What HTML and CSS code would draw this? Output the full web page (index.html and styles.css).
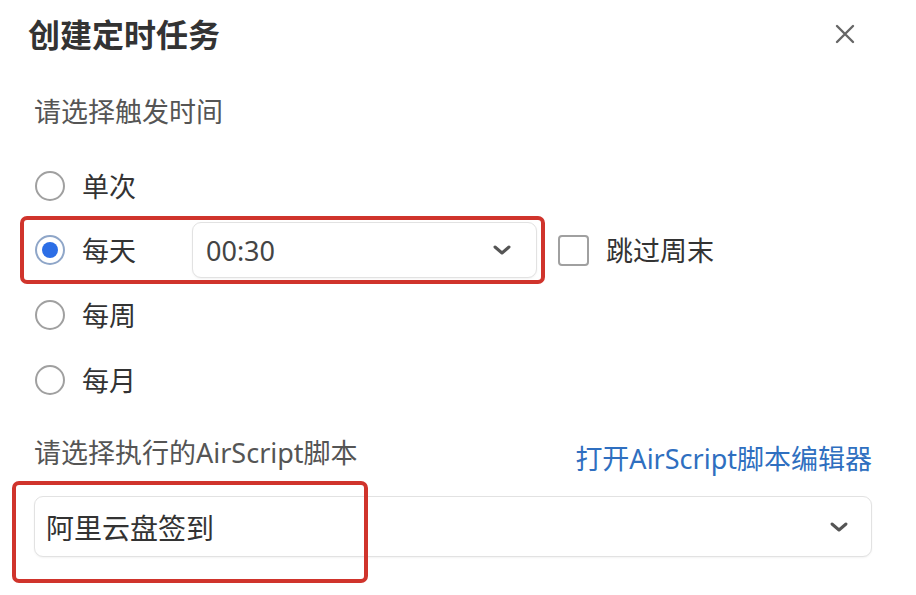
FILE: index.html
```html
<!DOCTYPE html>
<html lang="zh-CN">
<head>
    <meta charset="UTF-8" />
    <meta name="viewport" content="width=device-width, initial-scale=1.0"/>
    <title>创建定时任务</title>
    <link rel="stylesheet" href="styles.css">
</head>
<body>
    <div class="dialog">
        <div class="dialog-header">
            <h2>创建定时任务</h2>
            <button class="close" aria-label="关闭">
                <svg width="20" height="20" viewBox="0 0 20 20"><path d="M2 2 L18 18 M18 2 L2 18" stroke="#666" stroke-width="2.4" stroke-linecap="round"/></svg>
            </button>
        </div>

        <div class="label">请选择触发时间</div>

        <!-- TRIGGER OPTIONS -->
        <div class="options">
            <div class="option">
                <span class="radio"></span>
                <span class="option-text">单次</span>
            </div>
            <div class="option">
                <div class="mark-group">
                    <span class="radio checked"></span>
                    <span class="option-text">每天</span>
                    <div class="select time-select">
                        <span>00:30</span>
                        <svg width="20" height="12" viewBox="0 0 20 12"><polyline points="3,3 10,9 17,3" fill="none" stroke="#555" stroke-width="3" stroke-linecap="round" stroke-linejoin="round"/></svg>
                    </div>
                </div>
                <span class="checkbox"></span>
                <span class="option-text">跳过周末</span>
            </div>
            <div class="option">
                <span class="radio"></span>
                <span class="option-text">每周</span>
            </div>
            <div class="option">
                <span class="radio"></span>
                <span class="option-text">每月</span>
            </div>
        </div>

        <div class="label-row">
            <div class="label">请选择执行的AirScript脚本</div>
            <a href="#" class="link">打开AirScript脚本编辑器</a>
        </div>

        <div class="script-field">
            <div class="select script-select">
                <span>阿里云盘签到</span>
                <svg width="20" height="12" viewBox="0 0 20 12"><polyline points="3,3 10,9 17,3" fill="none" stroke="#555" stroke-width="3" stroke-linecap="round" stroke-linejoin="round"/></svg>
            </div>
            <div class="mark"></div>
        </div>
    </div>
</body>
</html>
```

FILE: styles.css
```css
* {
    margin: 0;
    padding: 0;
    box-sizing: border-box;
    font-family: 'Noto Sans', 'Noto Sans CJK SC', sans-serif;
}

body {
    background: #fff;
    color: #333;
    width: 916px;
    height: 595px;
    overflow: hidden;
}

.dialog {
    padding: 0 44px 0 34px;
}

.dialog-header {
    height: 70px;
    display: flex;
    align-items: center;
    justify-content: space-between;
    margin-left: -6px;
    margin-right: 17px;
}

.dialog-header h2 {
    font-size: 32px;
    font-weight: bold;
    color: #333;
    line-height: 44px;
}

.close {
    background: none;
    border: none;
    width: 20px;
    height: 20px;
    display: flex;
    margin-top: -2px;
}

.label {
    font-size: 27px;
    color: #555;
    line-height: 44px;
    margin-top: 20px;
}

.options {
    margin-top: 20px;
}

.option {
    height: 64px;
    display: flex;
    align-items: center;
}

.option:nth-child(3) {
    height: 66px;
}

.radio {
    width: 30px;
    height: 30px;
    border: 2px solid #a0a0a0;
    border-radius: 50%;
    margin-left: 1px;
    flex-shrink: 0;
    display: flex;
    align-items: center;
    justify-content: center;
}

.radio.checked {
    border-color: #8fa6c8;
}

.radio.checked::after {
    content: '';
    width: 16px;
    height: 16px;
    border-radius: 50%;
    background: #2c6ee6;
}

.option-text {
    font-size: 27px;
    color: #333;
    margin-left: 17px;
    line-height: 1;
}

.mark-group {
    display: flex;
    align-items: center;
    margin-left: -14px;
    border: 4px solid #d0342c;
    border-radius: 7px;
    padding: 2px 4px 2px 10px;
    height: 68px;
}

.select {
    display: flex;
    align-items: center;
    justify-content: space-between;
    border: 1px solid #e2e2e2;
    border-radius: 9px;
    background: #fff;
    box-shadow: 0 1px 2px rgba(0, 0, 0, 0.05);
}

.time-select {
    width: 345px;
    height: 56px;
    margin-left: 56px;
    padding: 0 24px 0 13px;
    font-size: 27px;
    color: #444;
}

.checkbox {
    width: 31px;
    height: 31px;
    border: 2px solid #a0a0a0;
    border-radius: 4px;
    margin-left: 13px;
    flex-shrink: 0;
}

.label-row {
    display: flex;
    justify-content: space-between;
    align-items: center;
}

.label-row .label {
    margin-top: 17px;
}

.link {
    font-size: 27px;
    color: #2f6fc0;
    text-decoration: none;
    margin-top: 26px;
}

.script-field {
    position: relative;
    margin-top: 19px;
}

.script-select {
    height: 61px;
    padding: 0 22px 0 11px;
    font-size: 28px;
    color: #333;
}

.mark {
    position: absolute;
    left: -22px;
    top: -15px;
    width: 356px;
    height: 102px;
    border: 4px solid #d0342c;
    border-radius: 7px;
}
```
